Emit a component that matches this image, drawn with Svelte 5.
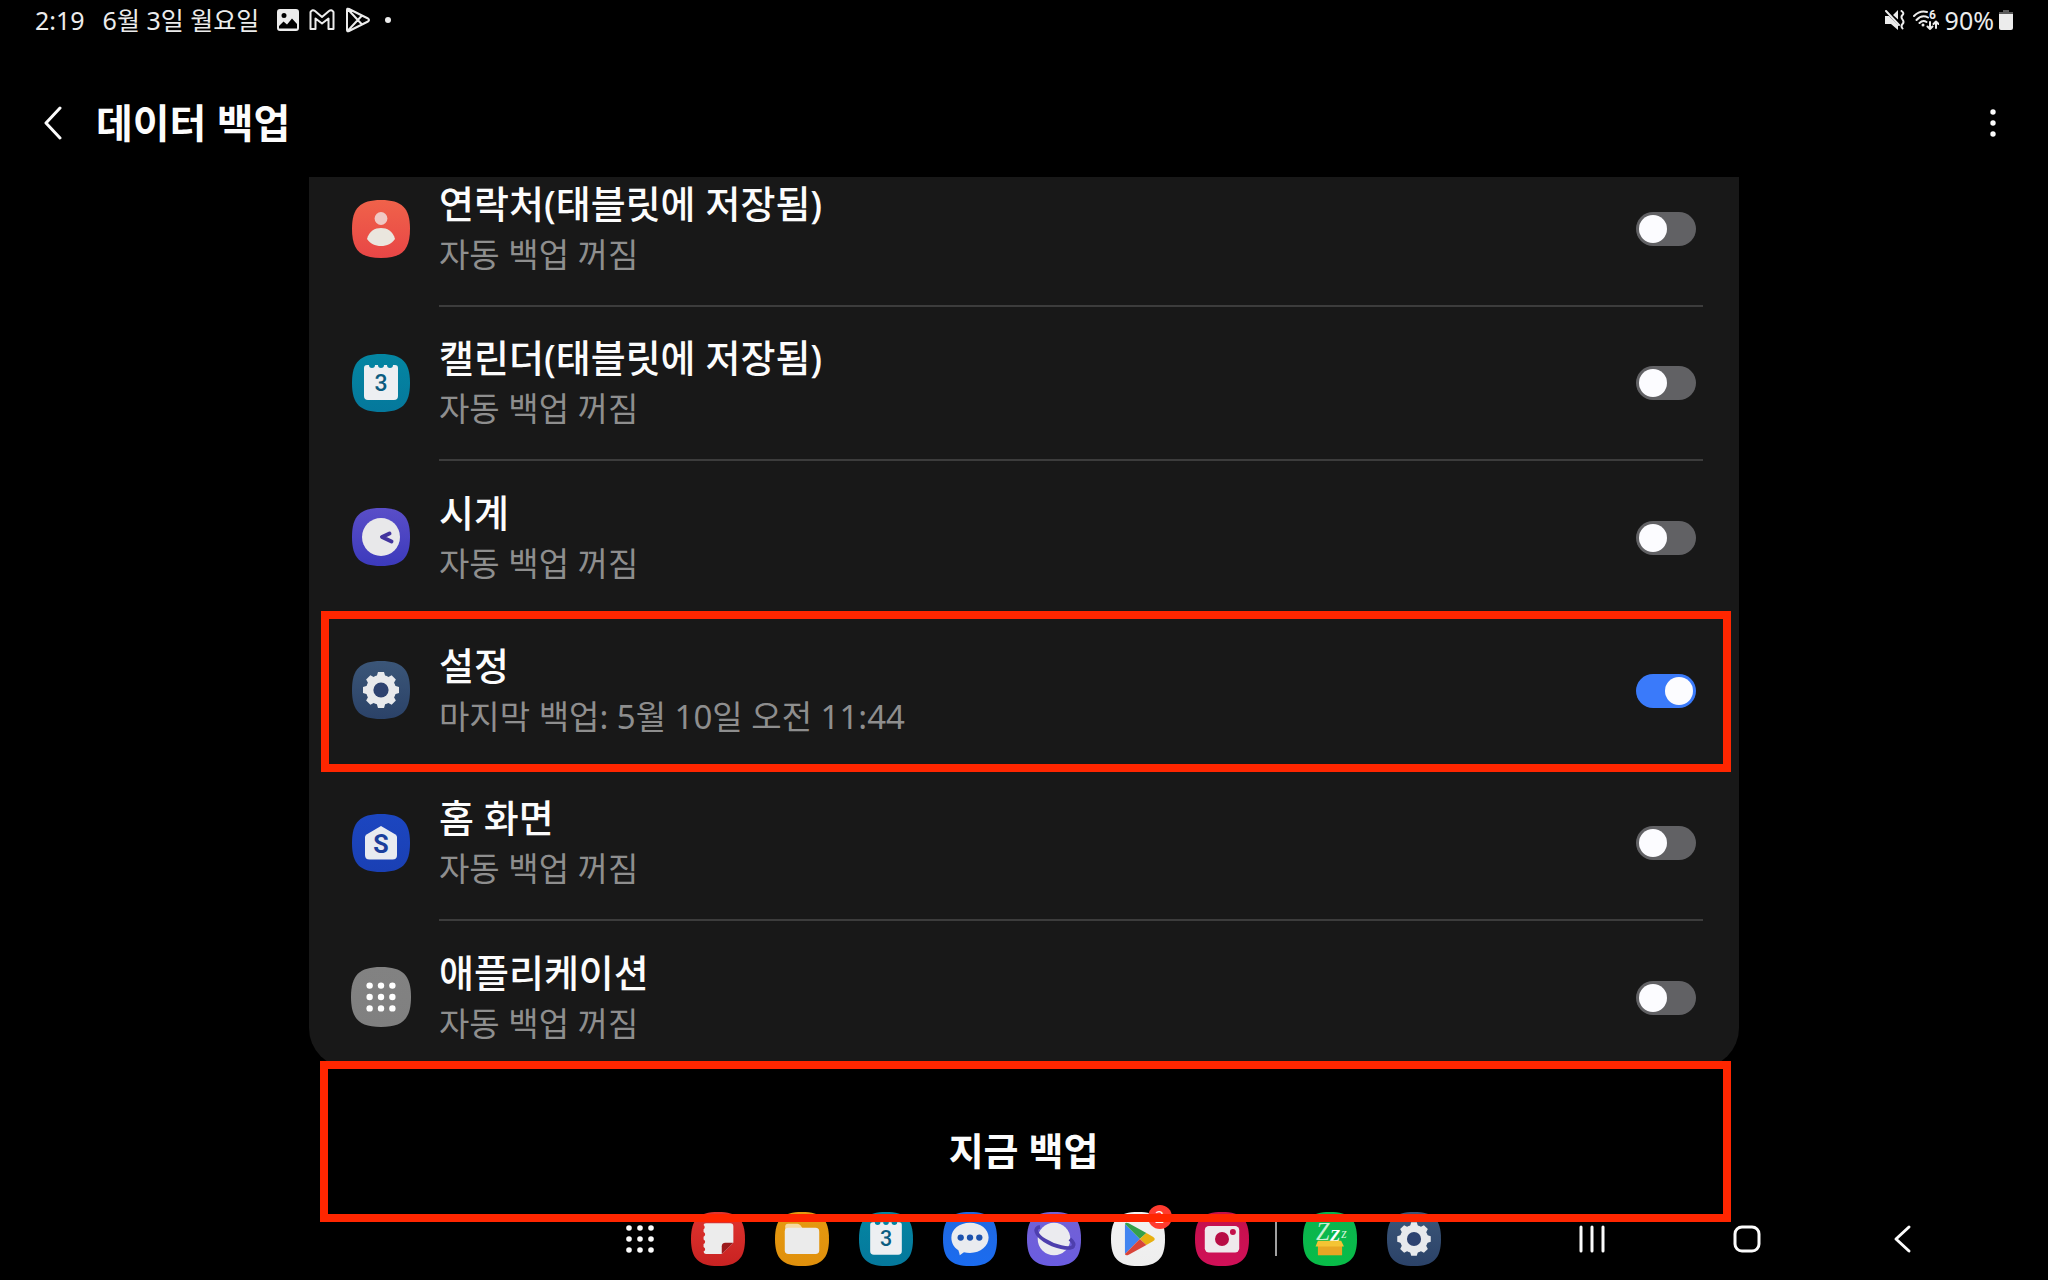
<script lang="ts">
	type Item = { id: string; title: string; detail: string; enabled: boolean; divider: boolean };

	const off = '자동 백업 꺼짐';

	let items: Item[] = $state([
		{ id: 'contacts', title: '연락처(태블릿에 저장됨)', detail: off, enabled: false, divider: true },
		{ id: 'calendar', title: '캘린더(태블릿에 저장됨)', detail: off, enabled: false, divider: true },
		{ id: 'clock', title: '시계', detail: off, enabled: false, divider: false },
		{
			id: 'settings',
			title: '설정',
			detail: '마지막 백업: 5월 10일 오전 11:44',
			enabled: true,
			divider: false
		},
		{ id: 'home', title: '홈 화면', detail: off, enabled: false, divider: true },
		{ id: 'apps', title: '애플리케이션', detail: off, enabled: false, divider: false }
	]);

	const pinned = [
		{ id: 'notes', label: '노트' },
		{ id: 'files', label: '내 파일' },
		{ id: 'calendar', label: '캘린더' },
		{ id: 'messages', label: '메시지' },
		{ id: 'internet', label: '인터넷' },
		{ id: 'play', label: 'Play 스토어' },
		{ id: 'camera', label: '카메라' }
	];

	const recent = [
		{ id: 'zip', label: 'ZArchiver' },
		{ id: 'settings', label: '설정' }
	];

	// top and bottom colour of each icon tile
	const tiles: Record<string, [string, string]> = {
		contacts: ['#f0624a', '#e84646'],
		calendar: ['#0486a2', '#05789c'],
		clock: ['#5a4ec8', '#3c3abc'],
		settings: ['#3b5678', '#2b4268'],
		home: ['#1c46c0', '#1a40b4'],
		apps: ['#828282', '#808080'],
		notes: ['#e0342e', '#c82222'],
		files: ['#e69a10', '#e0900c'],
		messages: ['#2068e0', '#1b6cf0'],
		internet: ['#7462d4', '#6a5ce0'],
		play: ['#f2f2f2', '#eeeeee'],
		camera: ['#c4104a', '#d01058'],
		zip: ['#0cb450', '#08bc48']
	};

	const dots = [-1, 0, 1].flatMap((y) => [-1, 0, 1].map((x) => ({ x, y })));
	const teeth = [0, 45, 90, 135, 180, 225, 270, 315];
</script>

{#snippet tile(id: string, place: string)}
	<svg class="tile" viewBox="0 0 58 58" aria-hidden="true">
		<defs>
			<linearGradient id="{place}-{id}" x1="0" y1="0" x2="0" y2="1">
				<stop offset="0" stop-color={tiles[id][0]} />
				<stop offset="1" stop-color={tiles[id][1]} />
			</linearGradient>
		</defs>
		<path
			d="M29 0C50 0 58 8 58 29S50 58 29 58 0 50 0 29 8 0 29 0Z"
			fill="url(#{place}-{id})"
		/>
		{#if id === 'contacts'}
			<circle cx="29" cy="18.5" r="6.4" fill="#f0c9c4" />
			<path
				d="M15 39C17 31 23 28 29 28S41 31 43 39C40 43.500 35 46 29 46S18 43.500 15 39Z"
				fill="#eae6de"
			/>
		{:else if id === 'calendar'}
			<path
				d="M15 11H17A3 3 0 0 0 23 11H26A3 3 0 0 0 32 11H35A3 3 0 0 0 41 11H43Q46 11 46 14V42Q46 46 42 46H16Q12 46 12 42V14Q12 11 15 11Z"
				fill="#edeff2"
			/>
			<text x="29" y="37" class="glyph day">3</text>
		{:else if id === 'clock'}
			<circle cx="29" cy="29" r="19" fill="#e8e8ea" />
			<path
				d="M37.500 25.500L30 29L39.500 33.500"
				fill="none"
				stroke="#42349e"
				stroke-width="4"
				stroke-linecap="round"
				stroke-linejoin="round"
			/>
		{:else if id === 'settings'}
			<g fill="#e8e9ec">
				<circle cx="29" cy="29" r="15" />
				{#each teeth as angle (angle)}
					<path d="M24.500 16L26 11H32L33.500 16Z" transform="rotate({angle} 29 29)" />
				{/each}
			</g>
			<circle cx="29" cy="29" r="7.6" fill="#2e4270" />
		{:else if id === 'home'}
			<path
				d="M29 12L43.500 20.500Q45 21.500 45 23V41Q45 45.500 40.500 45.500H17.500Q13 45.500 13 41V23Q13 21.500 14.500 20.500Z"
				fill="#e8ebf0"
			/>
			<text x="29" y="39" class="glyph letter">S</text>
		{:else if id === 'apps'}
			{#each dots as dot (`${dot.x}${dot.y}`)}
				<circle cx={29 + dot.x * 11} cy={29 + dot.y * 11} r="3.1" fill="#fff" />
			{/each}
		{:else if id === 'notes'}
			<path
				d="M16 12H42Q45.500 12 45.500 15.500V33L33 45H16Q13.500 45 13.500 42.500A2.700 2.700 0 0 0 13.500 37.500V34.500A2.700 2.700 0 0 0 13.500 29.500V26.500A2.700 2.700 0 0 0 13.500 21.500V18.500A2.700 2.700 0 0 0 13.500 14Q13.500 12 16 12Z"
				fill="#ececec"
			/>
			<path d="M33 45V37Q33 33 37 33H45.500Z" fill="#9c1a1c" />
		{:else if id === 'files'}
			<path d="M11 22V15.500Q11 12.500 14 12.500H24Q26 12.500 27.500 14.500L30 18V22Z" fill="#f6d9a0" />
			<rect x="10.500" y="17" width="37" height="28" rx="4" fill="#ebebeb" />
		{:else if id === 'messages'}
			<path
				d="M29 11.500C40.500 11.500 49 18.500 49 27.500S40.500 44 29 44Q25.500 44 22.500 43.200L18 46.500Q17.500 43.500 16.500 41C11.500 38 9 33 9 27.500 9 18.500 17.500 11.500 29 11.500Z"
				fill="#e9ebef"
			/>
			{#each [19, 29, 39] as cx (cx)}
				<circle {cx} cy="27.500" r="3.400" fill="#1d52ae" />
			{/each}
		{:else if id === 'internet'}
			<circle cx="29" cy="29" r="17.500" fill="#ebebef" />
			<path
				d="M14 16C7 17 9 24 19 30.500 29 37 46 41 49.500 37 51 35 49.500 32 46 29"
				fill="none"
				stroke="#4e3fae"
				stroke-width="4"
			/>
		{:else if id === 'play'}
			<path d="M15 13V45L31 29Z" fill="#4285f0" />
			<path d="M15 13Q15.500 10.500 19 12L38 22.500L31 29Z" fill="#34a04a" />
			<path d="M38 22.500L45 26.500Q49 29 45 31.500L38 35.500L31 29Z" fill="#e8b010" />
			<path d="M15 45Q15.500 47.500 19 46L38 35.500L31 29Z" fill="#d8443a" />
		{:else if id === 'camera'}
			<rect x="10.500" y="15" width="37" height="28.500" rx="4.500" fill="#efe9ec" />
			<circle cx="29" cy="29" r="7.500" fill="#b80c44" />
			<circle cx="40.700" cy="21.500" r="3.200" fill="#c4104a" />
		{:else if id === 'zip'}
			<text x="14" y="30" class="zed">Z</text>
			<text x="29" y="31" class="zed mid">Z</text>
			<text x="41" y="28" class="zed small">z</text>
			<path d="M16 36H42V46.500H16Z" fill="#e8a624" />
			<path d="M16 31H41L44 37H13.500Z" fill="#f4c434" />
		{/if}
	</svg>
{/snippet}

<div class="screen">
	<div class="status-bar">
		<div class="status-group">
			<span class="time">2:19</span>
			<span class="date">6월 3일 월요일</span>
			<svg width="22" height="22" viewBox="0 0 22 22" aria-hidden="true">
				<path
					fill-rule="evenodd"
					d="M3 0H19Q22 0 22 3V19Q22 22 19 22H3Q0 22 0 19V3Q0 0 3 0ZM7 4A2.500 2.500 0 1 0 7 9 2.500 2.500 0 1 0 7 4ZM2 17V19.500H20V15L15 9.500 10 15.500 6.500 12.500Z"
				/>
			</svg>
			<svg class="outline" width="26" height="22" viewBox="0 0 26 22" aria-hidden="true">
				<path d="M1.500 3V20H6.500V9.500L13 14.500L19.500 9.500V20H24.500V3Q22.500 0 20 2L13 8L6 2Q3.500 0 1.500 3Z" />
			</svg>
			<svg class="outline" width="26" height="26" viewBox="0 0 26 26" aria-hidden="true">
				<path d="M2 3Q2 1 4 2L23 11.500Q25 13 23 14.500L4 24Q2 25 2 23ZM3 2.500L17 17.500M3 23.500L17 8.500" />
			</svg>
			<svg class="more-dot" width="6" height="6" viewBox="0 0 6 6" aria-hidden="true">
				<circle cx="3" cy="3" r="3" />
			</svg>
		</div>
		<div class="status-group end">
			<svg width="20" height="20" viewBox="0 0 20 20" aria-hidden="true">
				<path d="M0 6H4L13 15V20L6 14H0ZM8 5L13 0V9.500Z" />
				<path d="M1 1L14 15" class="stroke" />
				<path d="M16.500 1Q19.500 3 17.500 5T17.500 9.500 17.500 14 17.500 18.500" class="stroke" />
			</svg>
			<svg width="26" height="30" viewBox="0 -5 26 30" aria-hidden="true">
				<path d="M1 6Q7 0 14 2M3.500 10Q9 4 15 7.500M6.500 13Q10 9.500 13.500 12" class="stroke" />
				<circle cx="10" cy="15" r="1.500" />
				<text x="16" y="9" class="band">6</text>
				<path d="M17 12V19M14.500 16.500L17 19L19.500 16.500M23 18V11.500M20.500 14L23 11.500L25.500 14" class="stroke" />
			</svg>
			<span class="percent">90%</span>
			<svg width="14" height="20" viewBox="0 0 14 20" aria-hidden="true">
				<path d="M4 0H10V2H14V5H0V2H4Z" class="drained" />
				<path d="M0 4H14V18Q14 20 12 20H2Q0 20 0 18Z" />
			</svg>
		</div>
	</div>

	<header>
		<button type="button" class="icon-button" aria-label="뒤로">
			<svg class="line" width="20" height="34" viewBox="0 0 20 34">
				<path d="M17 2L3 17L17 32" />
			</svg>
		</button>
		<h1>데이터 백업</h1>
		<button type="button" class="icon-button" aria-label="옵션 더보기">
			<svg class="solid" width="8" height="28" viewBox="0 0 8 28">
				<circle cx="4" cy="3" r="2.700" />
				<circle cx="4" cy="14" r="2.700" />
				<circle cx="4" cy="25" r="2.700" />
			</svg>
		</button>
	</header>

	<main>
		<div class="card">
			<ul>
				{#each items as item (item.id)}
					<li class:highlight={item.id === 'settings'}>
						<div class="icon" class:large={item.id === 'apps'}>
							{@render tile(item.id, 'list')}
						</div>
						<div class="body" class:divider={item.divider}>
							<label for="switch-{item.id}">
								<span class="title">{item.title}</span>
								<span class="detail">{item.detail}</span>
							</label>
							<input
								type="checkbox"
								role="switch"
								id="switch-{item.id}"
								bind:checked={item.enabled}
							/>
						</div>
					</li>
				{/each}
			</ul>
		</div>
		<button type="button" class="backup">지금 백업</button>
	</main>

	<footer>
		<nav class="dock" aria-label="앱">
			<button type="button" class="drawer" aria-label="모든 앱">
				<svg class="solid" width="30" height="30" viewBox="0 0 30 30">
					{#each dots as dot (`${dot.x}${dot.y}`)}
						<circle cx={15 + dot.x * 11} cy={15 + dot.y * 11} r="2.800" />
					{/each}
				</svg>
			</button>
			{#each pinned as app (app.id)}
				<button type="button" class="app" aria-label={app.label}>
					{@render tile(app.id, 'dock')}
					{#if app.id === 'play'}
						<span class="badge">2</span>
					{/if}
				</button>
			{/each}
			<span class="separator"></span>
			{#each recent as app (app.id)}
				<button type="button" class="app" aria-label={app.label}>
					{@render tile(app.id, 'dock')}
				</button>
			{/each}
		</nav>
		<div class="system">
			<button type="button" aria-label="최근 앱">
				<svg class="line" width="28" height="30" viewBox="0 0 28 30">
					<path d="M3 3V27M14 3V27M25 3V27" />
				</svg>
			</button>
			<button type="button" aria-label="홈">
				<svg class="line" width="30" height="30" viewBox="0 0 30 30">
					<rect x="3" y="3" width="24" height="24" rx="7" />
				</svg>
			</button>
			<button type="button" aria-label="이전">
				<svg class="line" width="20" height="30" viewBox="0 0 20 30">
					<path d="M17 3L4 15L17 27" />
				</svg>
			</button>
		</div>
	</footer>
</div>

<style>
	:global(body) {
		background: #000;
	}

	.screen {
		min-height: 100vh;
		display: flex;
		flex-direction: column;
		background: #000;
		color: #fcfcfc;
		font-family: 'Noto Sans', 'Noto Sans CJK KR', sans-serif;
	}

	button {
		display: flex;
		align-items: center;
		justify-content: center;
		padding: 0;
		border: 0;
		background: none;
		color: inherit;
		font: inherit;
		cursor: pointer;
	}

	svg {
		display: block;
		flex: none;
	}

	.status-bar {
		display: flex;
		justify-content: space-between;
		align-items: center;
		height: 40px;
		padding: 0 35px;
		color: #ececec;
		font-size: 25px;
		line-height: 40px;
	}

	.status-group {
		display: flex;
		align-items: center;
		gap: 10px;
	}

	.status-group.end {
		gap: 8px;
	}

	.status-group svg {
		fill: #ececec;
	}

	.status-group .outline,
	.status-group .stroke {
		fill: none;
		stroke: #ececec;
		stroke-width: 2;
		stroke-linejoin: round;
		stroke-linecap: round;
	}

	.status-group .drained {
		fill: #5a5a5a;
	}

	.date {
		margin: 0 8px;
	}

	.more-dot {
		margin-left: 4px;
	}

	.band {
		font-family: Roboto, sans-serif;
		font-size: 12px;
		font-weight: 700;
	}

	.percent {
		margin: 0 -3px 0 -2px;
	}

	header {
		display: flex;
		align-items: center;
		height: 108px;
		padding: 29px 27px 0 25px;
	}

	.icon-button {
		width: 56px;
		height: 56px;
	}

	h1 {
		flex: 1;
		margin: 0 0 0 15px;
		font-size: 40px;
		line-height: 56px;
		font-weight: 700;
	}

	.line {
		fill: none;
		stroke: #fcfcfc;
		stroke-width: 3;
		stroke-linecap: round;
		stroke-linejoin: round;
	}

	.solid {
		fill: #fcfcfc;
	}

	main {
		box-sizing: border-box;
		width: 100%;
		max-width: 1430px;
		margin: 0 auto;
	}

	.card {
		overflow: hidden;
		background: #181818;
		border-radius: 0 0 40px 40px;
	}

	/* list is scrolled slightly past its top */
	ul {
		list-style: none;
		margin: -24px 0 -6px;
		padding: 0;
	}

	li {
		position: relative;
		display: flex;
		padding: 0 36px 0 42px;
	}

	.highlight::after {
		content: '';
		position: absolute;
		inset: -3px 8px -5px 12px;
		border: 8px solid #ff2600;
		pointer-events: none;
	}

	.icon {
		display: flex;
		align-items: center;
		justify-content: center;
		width: 60px;
		height: 152px;
		margin-right: 28px;
	}

	.tile {
		width: 58px;
		height: 58px;
	}

	.large .tile {
		width: 60px;
		height: 60px;
	}

	.body {
		box-sizing: border-box;
		flex: 1;
		display: flex;
		align-items: center;
		justify-content: space-between;
		height: 153px;
		padding-right: 7px;
	}

	.body.divider {
		height: 154px;
		border-bottom: 2px solid #3c3c3c;
	}

	label {
		display: flex;
		flex-direction: column;
		flex: 1;
	}

	.title {
		font-size: 38px;
		line-height: 52px;
		font-weight: 500;
	}

	.detail {
		color: #8e8e8e;
		font-size: 33px;
		line-height: 52px;
	}

	input {
		appearance: none;
		width: 60px;
		height: 34px;
		margin: 0;
		padding: 3px;
		border-radius: 17px;
		background: #616164;
		cursor: pointer;
	}

	input::before {
		content: '';
		display: block;
		width: 28px;
		height: 28px;
		border-radius: 50%;
		background: #fcfcff;
	}

	input:checked {
		background: #3a7afa;
	}

	input:checked::before {
		margin-left: auto;
	}

	.backup {
		position: relative;
		z-index: 1;
		width: calc(100% - 19px);
		height: 161px;
		margin: -7px 8px 0 11px;
		padding: 17px 4px 0 0;
		border: 8px solid #ff2600;
		font-size: 38px;
		line-height: 56px;
		font-weight: 700;
	}

	footer {
		display: grid;
		grid-template-columns: 1fr auto 1fr;
		align-items: center;
		margin-top: -10px;
	}

	.dock {
		grid-column: 2;
		display: flex;
		align-items: center;
		gap: 30px;
		padding-left: 11px;
	}

	.drawer {
		width: 42px;
		height: 54px;
	}

	.app {
		position: relative;
		width: 54px;
		height: 54px;
	}

	.app .tile {
		width: 54px;
		height: 54px;
	}

	.badge {
		position: absolute;
		top: -7px;
		right: -7px;
		width: 24px;
		height: 24px;
		border-radius: 50%;
		background: #ff3b2f;
		font-size: 16px;
		line-height: 24px;
		text-align: center;
	}

	.separator {
		width: 2px;
		height: 34px;
		margin: 0 -4px;
		background: #a0a0a0;
	}

	.system {
		display: flex;
		justify-content: flex-end;
		gap: 99px;
		padding-right: 118px;
	}

	.system button {
		width: 56px;
		height: 54px;
	}

	.glyph {
		text-anchor: middle;
		font-family: Roboto, sans-serif;
	}

	.day {
		fill: #0b5c80;
		font-size: 23px;
		font-weight: 500;
	}

	.letter {
		fill: #1b3f9c;
		font-size: 25px;
		font-weight: 700;
	}

	.zed {
		fill: #c8f0d2;
		font-family: 'Liberation Serif', serif;
		font-size: 26px;
		font-style: italic;
	}

	.mid {
		fill: #fff;
		font-size: 18px;
		font-weight: 700;
	}

	.small {
		font-size: 15px;
	}
</style>
